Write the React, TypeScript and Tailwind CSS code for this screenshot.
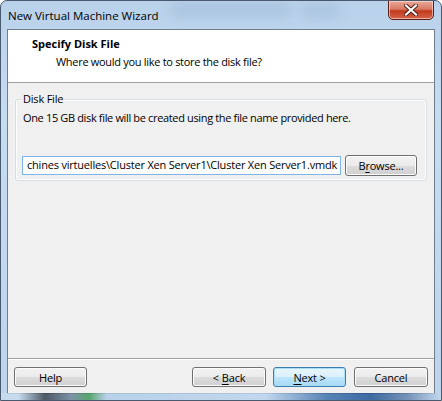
import React from 'react'

const font = { fontFamily: '"Segoe UI", "Open Sans", "Noto Sans", sans-serif' }

function WinButton({ children, primary = false, className = '' }: { children: React.ReactNode; primary?: boolean; className?: string }) {
  return (
    <button
      className={
        'h-[20px] rounded-[3px] border text-[11px] tracking-[-0.2px] leading-none text-black flex items-center justify-center ' +
        (primary
          ? 'border-[#3c7fb1] bg-[linear-gradient(#eaf6fd_0%,#d9f0fc_50%,#bee6fd_50%,#a7d9f5_100%)] shadow-[inset_0_0_0_1px_#a9ddf7] '
          : 'border-[#707070] bg-[linear-gradient(#f2f2f2_0%,#ebebeb_50%,#dddddd_50%,#cfcfcf_100%)] shadow-[inset_0_0_0_1px_#fcfcfc] ') +
        className
      }
    >
      {children}
    </button>
  )
}

export default function App() {
  return (
    <div style={font} className="w-[442px] h-[401px] bg-white text-[11px] tracking-[-0.2px]">
      <div className="relative w-[442px] h-[401px] rounded-t-[7px] border border-[#4a5a6c] bg-[linear-gradient(180deg,#b9d1ea_0%,#c6dcf1_30%,#bcd4ec_100%)] overflow-hidden">
        {/* blurred desktop behind the glass */}
        <div className="absolute left-[170px] top-[2px] w-[120px] h-[14px] rounded-full bg-[#9fb9d6] opacity-50 blur-[5px]" />
        <div className="absolute left-[300px] top-[2px] w-[40px] h-[16px] rounded-full bg-[#a3bcd8] opacity-50 blur-[5px]" />

        {/* title bar */}
        <div className="relative h-[28px] pl-[7px] pt-[7px] text-[11.5px] tracking-normal leading-[15px] text-black">
          New Virtual Machine Wizard
        </div>

        {/* close button */}
        <div className="absolute right-[7px] top-[-1px] w-[46px] h-[20px] rounded-b-[5px] border border-[#5a2018] bg-[linear-gradient(180deg,#e9a99a_0%,#d97a64_45%,#c2391d_55%,#d4644a_100%)] shadow-[inset_0_0_0_1px_rgba(255,230,220,0.6)] flex items-center justify-center">
          <svg width="14" height="12" viewBox="0 0 14 12">
            <path d="M2 1.5 L12 10.5 M12 1.5 L2 10.5" stroke="#4a1a10" strokeWidth="4" strokeLinecap="square" />
            <path d="M2 1.5 L12 10.5 M12 1.5 L2 10.5" stroke="#ffffff" strokeWidth="2.2" strokeLinecap="square" />
          </svg>
        </div>

        {/* client area */}
        <div className="relative mx-[6px] h-[365px] border border-[#6d7e90] bg-[#f0f0f0] flex flex-col">
          {/* header */}
          <div className="h-[53px] bg-white border-b border-[#a0a0a0] shrink-0">
            <div className="pl-[24px] pt-[6px] leading-[16px] font-bold tracking-normal text-black">Specify Disk File</div>
            <div className="pl-[48px] pt-[2px] leading-[16px] tracking-[-0.3px] text-black">Where would you like to store the disk file?</div>
          </div>

          {/* group box */}
          <div className="px-[7px] pt-[16px]">
            <div className="relative h-[82px] rounded-[3px] border border-[#d5dfe5] shadow-[inset_0_0_0_1px_#ffffff]">
              <div className="absolute left-[6px] top-[-9px] bg-[#f0f0f0] px-[1px] leading-[16px] text-black">Disk File</div>
              <div className="pl-[7px] pt-[10px] leading-[16px] tracking-[-0.35px] text-black">
                One 15 GB disk file will be created using the file name provided here.
              </div>
              <div className="flex items-center gap-[4px] pl-[6px] pt-[29px]">
                <div className="w-[319px] h-[19px] border border-[#7eb4ea] bg-white flex items-center pl-[4px] text-black whitespace-nowrap">
                  chines virtuelles\Cluster Xen Server1\Cluster Xen Server1.vmdk
                </div>
                <WinButton className="w-[72px] h-[21px]">
                  B<span className="underline underline-offset-2">r</span>owse...
                </WinButton>
              </div>
            </div>
          </div>

          <div className="flex-1" />

          {/* bottom separator + buttons */}
          <div className="border-t border-[#a0a0a0] shadow-[inset_0_1px_0_#ffffff] h-[35px] shrink-0 flex items-center px-[6px] pt-[2px]">
            <WinButton className="w-[73px]">Help</WinButton>
            <div className="flex-1" />
            <WinButton className="w-[74px]">
              &lt; <span className="underline underline-offset-2 ml-[3px]">B</span>ack
            </WinButton>
            <WinButton primary className="w-[73px] ml-[7px]">
              <span className="underline underline-offset-2">N</span>ext &gt;
            </WinButton>
            <WinButton className="w-[74px] ml-[8px]">Cancel</WinButton>
          </div>
        </div>

        {/* bottom frame with desktop showing through */}
        <div className="absolute left-0 right-0 bottom-0 h-[7px] bg-[linear-gradient(90deg,#c9dcef_0%,#c9dcef_4%,#333a44_10%,#6e8296_16%,#3d9a4e_20%,#b7d0e8_24%,#c3d8ee_60%,#3f6fa8_74%,#1f4f8f_84%,#5f7fa8_92%,#c3d8ee_100%)] opacity-80" />
      </div>
    </div>
  )
}
